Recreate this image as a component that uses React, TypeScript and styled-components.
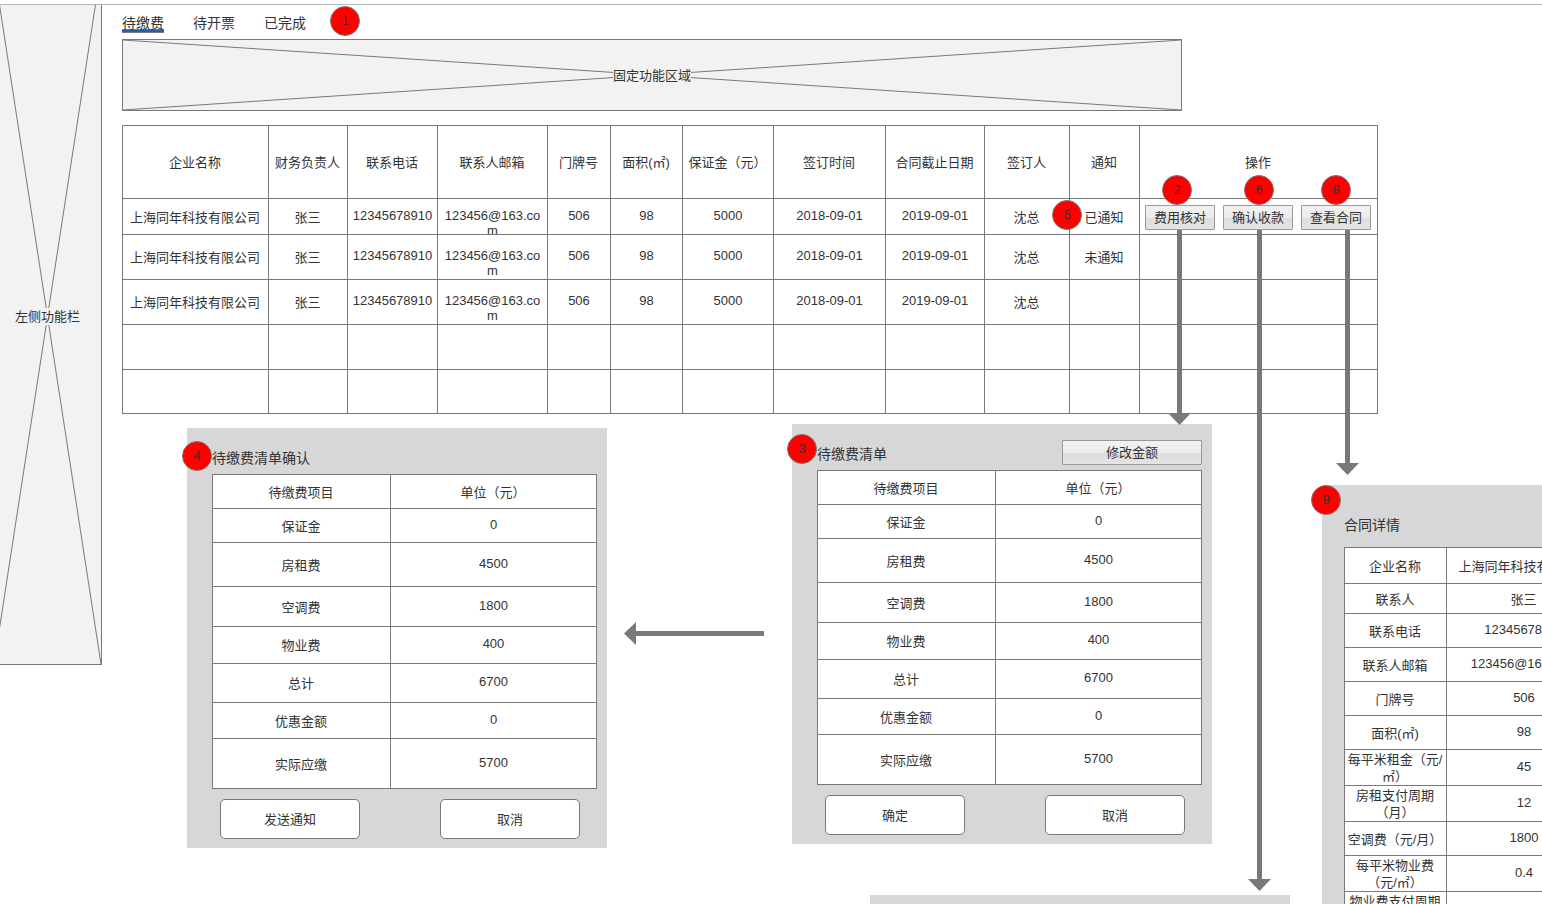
import React from "react";
import styled, { createGlobalStyle, css } from "styled-components";

const LINE = "#797979";
const INK = "#333333";

const GlobalStyle = createGlobalStyle`
  *, *::before, *::after { box-sizing: border-box; }
  body {
    margin: 0;
    background: #ffffff;
    color: ${INK};
    font: 13px/17px "Liberation Sans", "Noto Sans CJK SC", sans-serif;
  }
  button {
    font: inherit;
    color: inherit;
    padding: 0;
  }
`;

const Page = styled.div`
  height: 100vh;
  padding-top: 4px;
  overflow: hidden;
`;

const Canvas = styled.div`
  display: flex;
  align-items: flex-start;
  gap: 20px;
  border-top: 1px solid #b4b4b4;
`;

const Sidebar = styled.aside`
  flex: none;
  width: 102px;
  overflow: hidden;
`;

const Main = styled.main`
  flex: 1;
  min-width: 0;
`;

const PlaceholderBox = styled.div`
  display: grid;
  place-items: center;
  border: 1px solid ${LINE};
  background: #f2f2f2;

  > * { grid-area: 1 / 1; }
`;

const SideBox = styled(PlaceholderBox)`
  height: 697px;
  margin: -37px 0 0 -7px;
`;

const ToolBox = styled(PlaceholderBox)`
  width: 1060px;
  height: 72px;
`;

const CrossLines = styled.svg`
  width: 100%;
  height: 100%;
  min-height: 0;
`;

const PlaceholderLabel = styled.span`
  background: #f2f2f2;
`;

const Cross = () => (
  <CrossLines viewBox="0 0 100 100" preserveAspectRatio="none" aria-hidden="true">
    <path
      d="M0 0L100 100M100 0L0 100"
      stroke={LINE}
      fill="none"
      vectorEffect="non-scaling-stroke"
    />
  </CrossLines>
);

const TopBar = styled.div`
  display: flex;
  align-items: flex-start;
  gap: 24px;
  height: 34px;
  padding-top: 1px;
`;

const Tabs = styled.nav`
  display: flex;
  gap: 29px;
  padding-top: 5px;
  font-size: 14px;
`;

const Tab = styled.a<{ $active?: boolean }>`
  height: 22px;
  padding-top: 2px;
  line-height: 20px;
  color: inherit;
  text-decoration: none;
  ${(p) =>
    p.$active &&
    css`
      background: linear-gradient(#1e62b0, #1e62b0) 0 19px / 100% 2px no-repeat,
        linear-gradient(${LINE}, ${LINE}) 0 18px / 100% 4px no-repeat;
    `}
`;

const Badge = styled.span`
  display: grid;
  place-items: center;
  width: 30px;
  height: 30px;
  padding-bottom: 2px;
  border: 1px solid ${LINE};
  border-radius: 50%;
  background: #ff0000;
  font-size: 13px;
  line-height: 15px;
`;

const PinnedBadge = styled(Badge)<{ $left: number; $top: number }>`
  position: absolute;
  z-index: 2;
  left: ${(p) => p.$left}px;
  top: ${(p) => p.$top}px;
`;

const Table = styled.table`
  table-layout: fixed;
  border-spacing: 0;
  border: solid ${LINE};
  border-width: 1px 0 0 1px;
  background: #ffffff;
`;

const ContractTable = styled(Table)`
  width: 1256px;
  margin-top: 14px;
`;

const Row = styled.tr<{ $height: number }>`
  height: ${(p) => p.$height}px;
`;

const cell = css`
  padding: 1px 3px 0 2px;
  border: solid ${LINE};
  border-width: 0 1px 1px 0;
  text-align: center;
  vertical-align: middle;
  font-weight: normal;
`;

const HeadCell = styled.th`
  ${cell}
`;

const Cell = styled.td<{ $numeric?: boolean }>`
  ${cell}
  position: relative;
  ${(p) =>
    p.$numeric &&
    css`
      padding: 0 2px 3px;
      line-height: 15px;
    `}
`;

const FilledCell = styled(Cell)`
  padding: 0;
`;

const Email = styled.div<{ $height: number }>`
  height: ${(p) => p.$height}px;
  padding: ${(p) => Math.floor((p.$height - 17) / 2)}px 5px 0;
  overflow: hidden;
  line-height: 15px;
  word-break: break-all;
`;

const Actions = styled.div`
  display: flex;
  gap: 8px;
  padding: 6px 5px 4px;
`;

const Action = styled.div`
  position: relative;
`;

const GreyButton = styled.button<{ $width: number }>`
  display: block;
  width: ${(p) => p.$width}px;
  height: 25px;
  border: 1px solid #999999;
  border-radius: 1px;
  background: linear-gradient(#f2f2f2, #ebebeb 50%, #dddddd 50%, #e4e4e4);
`;

const DownArrowSvg = styled.svg<{ $left: number }>`
  position: absolute;
  z-index: 1;
  top: 100%;
  left: ${(p) => p.$left}px;
`;

const DownArrow = ({ left, length }: { left: number; length: number }) => (
  <DownArrowSvg $left={left} width="23" height={length} fill={LINE} aria-hidden="true">
    <path d={`M9 0H14V${length - 12}H23L11.5 ${length}L0 ${length - 12}H9Z`} />
  </DownArrowSvg>
);

const LeftArrow = styled.svg`
  flex: none;
  margin: 208px 28px 0 17px;
`;

const Dialogs = styled.div`
  display: flex;
  align-items: flex-start;
  padding-left: 65px;
`;

const DialogColumn = styled.div`
  display: flex;
  flex: none;
  flex-direction: column;
  gap: 51px;
  width: 420px;
  padding-top: 10px;
`;

const Panel = styled.section`
  position: relative;
  flex: none;
  width: 420px;
  padding: 16px 10px 9px 25px;
  background: #d7d7d7;
`;

const ConfirmPanel = styled(Panel)`
  margin-top: 14px;
`;

const NextPanel = styled(Panel)`
  height: 420px;
  margin-left: 78px;
`;

const DetailPanel = styled(Panel)`
  width: 302px;
  margin: 71px 0 0 110px;
  padding: 30px 22px;
`;

const PanelHead = styled.header`
  display: flex;
  justify-content: space-between;
  height: 25px;
  margin-bottom: 5px;
`;

const PanelTitle = styled.h2`
  margin: 0;
  padding-top: 4px;
  font-size: 14px;
  font-weight: normal;
  line-height: 20px;
`;

const DetailTitle = styled(PanelTitle)`
  padding: 0 0 12px;
`;

const FeeTable = styled(Table)`
  width: 385px;
`;

const DetailTable = styled(Table)`
  width: 258px;
`;

const PanelFoot = styled.footer`
  display: flex;
  gap: 80px;
  padding: 10px 8px 0;
`;

const RoundButton = styled.button`
  width: 140px;
  height: 40px;
  border: 1px solid ${LINE};
  border-radius: 5px;
  background: #ffffff;
`;

const columns: [string, number][] = [
  ["企业名称", 146],
  ["财务负责人", 79],
  ["联系电话", 90],
  ["联系人邮箱", 110],
  ["门牌号", 63],
  ["面积(㎡)", 72],
  ["保证金（元）", 91],
  ["签订时间", 112],
  ["合同截止日期", 99],
  ["签订人", 85],
  ["通知", 70],
  ["操作", 238],
];

const contracts = [
  { height: 36, notice: "已通知", actions: true },
  { height: 45, notice: "未通知", actions: false },
  { height: 45, notice: "", actions: false },
];

const actions = [
  { label: "费用核对", step: 2, badgeLeft: 17, arrowLeft: 23, length: 195 },
  { label: "确认收款", step: 6, badgeLeft: 21, arrowLeft: 25, length: 661 },
  { label: "查看合同", step: 8, badgeLeft: 20, arrowLeft: 35, length: 245 },
];

const fees: [string, string, number][] = [
  ["保证金", "0", 34],
  ["房租费", "4500", 44],
  ["空调费", "1800", 40],
  ["物业费", "400", 37],
  ["总计", "6700", 39],
  ["优惠金额", "0", 36],
  ["实际应缴", "5700", 50],
];

const details: [string, string, number][] = [
  ["企业名称", "上海同年科技有限公司", 36],
  ["联系人", "张三", 30],
  ["联系电话", "12345678910", 34],
  ["联系人邮箱", "123456@163.com", 34],
  ["门牌号", "506", 34],
  ["面积(㎡)", "98", 34],
  ["每平米租金（元/㎡）", "45", 36],
  ["房租支付周期（月）", "12", 36],
  ["空调费（元/月）", "1800", 34],
  ["每平米物业费（元/㎡）", "0.4", 36],
  ["物业费支付周期（月）", "12", 36],
];

const isNumeric = (text: string) => /^\d/.test(text);

const Fees = () => (
  <FeeTable>
    <colgroup>
      <col width={178} />
      <col width={206} />
    </colgroup>
    <thead>
      <Row $height={34}>
        <HeadCell>待缴费项目</HeadCell>
        <HeadCell>单位（元）</HeadCell>
      </Row>
    </thead>
    <tbody>
      {fees.map(([name, amount, height]) => (
        <Row key={name} $height={height}>
          <Cell>{name}</Cell>
          <Cell $numeric>{amount}</Cell>
        </Row>
      ))}
    </tbody>
  </FeeTable>
);

export default function App() {
  return (
    <Page>
      <GlobalStyle />
      <Canvas>
        <Sidebar>
          <SideBox>
            <Cross />
            <PlaceholderLabel>左侧功能栏</PlaceholderLabel>
          </SideBox>
        </Sidebar>
        <Main>
          <TopBar>
            <Tabs>
              <Tab href="#pending" $active>待缴费</Tab>
              <Tab href="#invoice">待开票</Tab>
              <Tab href="#done">已完成</Tab>
            </Tabs>
            <Badge>1</Badge>
          </TopBar>
          <ToolBox>
            <Cross />
            <PlaceholderLabel>固定功能区域</PlaceholderLabel>
          </ToolBox>
          <ContractTable>
            <colgroup>
              {columns.map(([name, width]) => (
                <col key={name} width={width} />
              ))}
            </colgroup>
            <thead>
              <Row $height={73}>
                {columns.map(([name]) => (
                  <HeadCell key={name}>{name}</HeadCell>
                ))}
              </Row>
            </thead>
            <tbody>
              {contracts.map((row, i) => (
                <Row key={i} $height={row.height}>
                  <Cell>上海同年科技有限公司</Cell>
                  <Cell>张三</Cell>
                  <Cell $numeric>12345678910</Cell>
                  <FilledCell>
                    <Email $height={row.height - 1}>123456@163.com</Email>
                  </FilledCell>
                  <Cell $numeric>506</Cell>
                  <Cell $numeric>98</Cell>
                  <Cell $numeric>5000</Cell>
                  <Cell $numeric>2018-09-01</Cell>
                  <Cell $numeric>2019-09-01</Cell>
                  <Cell>沈总</Cell>
                  <Cell>
                    {row.notice}
                    {row.actions && <PinnedBadge $left={-18} $top={1}>5</PinnedBadge>}
                  </Cell>
                  <FilledCell>
                    {row.actions && (
                      <Actions>
                        {actions.map((a) => (
                          <Action key={a.step}>
                            <GreyButton type="button" $width={70}>{a.label}</GreyButton>
                            <PinnedBadge $left={a.badgeLeft} $top={-30}>{a.step}</PinnedBadge>
                            <DownArrow left={a.arrowLeft} length={a.length} />
                          </Action>
                        ))}
                      </Actions>
                    )}
                  </FilledCell>
                </Row>
              ))}
              {[45, 44].map((height) => (
                <Row key={height} $height={height}>
                  {columns.map(([name]) => (
                    <Cell key={name} />
                  ))}
                </Row>
              ))}
            </tbody>
          </ContractTable>
          <Dialogs>
            <ConfirmPanel>
              <PinnedBadge $left={-5} $top={13}>4</PinnedBadge>
              <PanelHead>
                <PanelTitle>待缴费清单确认</PanelTitle>
              </PanelHead>
              <Fees />
              <PanelFoot>
                <RoundButton type="button">发送通知</RoundButton>
                <RoundButton type="button">取消</RoundButton>
              </PanelFoot>
            </ConfirmPanel>
            <LeftArrow width="140" height="23" fill={LINE} aria-hidden="true">
              <path d="M0 11.5L12 0V9H140V14H12V23Z" />
            </LeftArrow>
            <DialogColumn>
              <Panel>
                <PinnedBadge $left={-5} $top={10}>3</PinnedBadge>
                <PanelHead>
                  <PanelTitle>待缴费清单</PanelTitle>
                  <GreyButton type="button" $width={140}>修改金额</GreyButton>
                </PanelHead>
                <Fees />
                <PanelFoot>
                  <RoundButton type="button">确定</RoundButton>
                  <RoundButton type="button">取消</RoundButton>
                </PanelFoot>
              </Panel>
              <NextPanel />
            </DialogColumn>
            <DetailPanel>
              <PinnedBadge $left={-11} $top={0}>9</PinnedBadge>
              <DetailTitle>合同详情</DetailTitle>
              <DetailTable>
                <colgroup>
                  <col width={102} />
                  <col width={155} />
                </colgroup>
                <tbody>
                  {details.map(([name, value, height]) => (
                    <Row key={name} $height={height}>
                      <Cell>{name}</Cell>
                      <Cell $numeric={isNumeric(value)}>{value}</Cell>
                    </Row>
                  ))}
                </tbody>
              </DetailTable>
            </DetailPanel>
          </Dialogs>
        </Main>
      </Canvas>
    </Page>
  );
}
